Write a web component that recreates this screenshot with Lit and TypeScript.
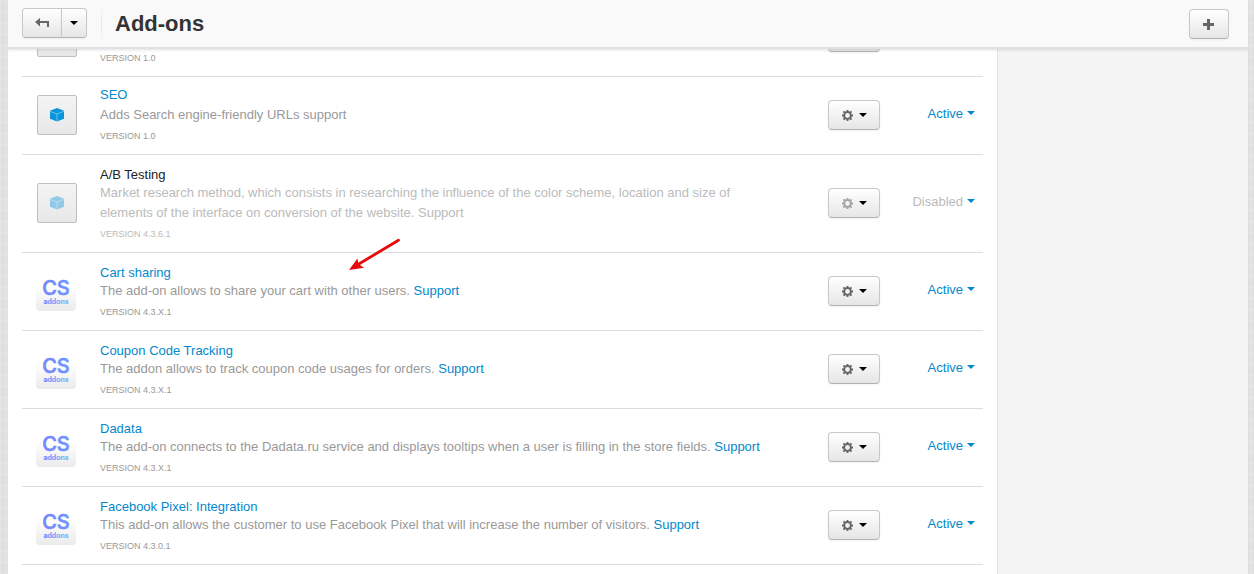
import { LitElement, html, css, svg, nothing } from "lit";
import { customElement, property } from "lit/decorators.js";
import { classMap } from "lit/directives/class-map.js";

interface Addon {
  name?: string;
  description?: string;
  support?: boolean;
  version: string;
  logo: "box" | "cs";
  disabled?: boolean;
  vendor?: boolean;
}

const ADDONS: Addon[] = [
  { version: "1.0", logo: "box" },
  { name: "SEO", description: "Adds Search engine-friendly URLs support", version: "1.0", logo: "box" },
  {
    name: "A/B Testing",
    description:
      "Market research method, which consists in researching the influence of the color scheme, location and size of elements of the interface on conversion of the website.",
    support: true,
    version: "4.3.6.1",
    logo: "box",
    disabled: true,
    vendor: true,
  },
  {
    name: "Cart sharing",
    description: "The add-on allows to share your cart with other users.",
    support: true,
    version: "4.3.X.1",
    logo: "cs",
    vendor: true,
  },
  {
    name: "Coupon Code Tracking",
    description: "The addon allows to track coupon code usages for orders.",
    support: true,
    version: "4.3.X.1",
    logo: "cs",
    vendor: true,
  },
  {
    name: "Dadata",
    description:
      "The add-on connects to the Dadata.ru service and displays tooltips when a user is filling in the store fields.",
    support: true,
    version: "4.3.X.1",
    logo: "cs",
    vendor: true,
  },
  {
    name: "Facebook Pixel: Integration",
    description:
      "This add-on allows the customer to use Facebook Pixel that will increase the number of visitors.",
    support: true,
    version: "4.3.0.1",
    logo: "cs",
    vendor: true,
  },
];

const buttonStyles = css`
  button {
    box-sizing: border-box;
    display: inline-flex;
    align-items: center;
    justify-content: center;
    height: 30px;
    margin: 0;
    padding: 0;
    border: 1px solid #c8c8c8;
    border-bottom-color: #b3b3b3;
    border-radius: 4px;
    background: linear-gradient(#ffffff, #e6e6e6);
    box-shadow: 0 1px 2px rgba(0, 0, 0, 0.05);
    color: #000;
    font: inherit;
    cursor: pointer;
  }
  .caret {
    width: 0;
    height: 0;
    border: 4px solid transparent;
    border-top-color: currentColor;
    border-bottom: 0;
  }
`;

@customElement("addon-logo")
export class AddonLogo extends LitElement {
  @property() kind: "box" | "cs" = "box";
  @property({ type: Boolean }) dimmed = false;

  static styles = css`
    :host {
      display: block;
      width: 40px;
      height: 40px;
    }
    .tile {
      box-sizing: border-box;
      width: 40px;
      height: 40px;
      display: grid;
      place-items: center;
      border-radius: 4px;
    }
    .box {
      border: 1px solid #c0c0c0;
      border-radius: 2px;
      background: linear-gradient(#f4f4f4, #e8e8e8);
    }
    .cs {
      background: linear-gradient(#ffffff 35%, #ebebeb);
    }
    svg {
      display: block;
    }
    .dimmed {
      opacity: 0.4;
    }
    .initials {
      font: 500 20px Inter, sans-serif;
    }
    .word {
      font: 600 7px Inter, sans-serif;
    }
  `;

  render() {
    return this.kind === "cs"
      ? html`<div class="tile cs">
          <svg width="40" height="40" viewBox="0 0 40 40" role="img" aria-label="CS addons">
            <defs>
              <linearGradient id="ink" x1="0" y1="0" x2="1" y2="0">
                <stop offset="0" stop-color="#7585fb" />
                <stop offset="1" stop-color="#6d95ff" />
              </linearGradient>
              <linearGradient id="sub" x1="0" y1="0" x2="1" y2="0">
                <stop offset="0" stop-color="#6d84fb" />
                <stop offset="1" stop-color="#79bdf8" />
              </linearGradient>
            </defs>
            <text class="initials" x="20" y="24" text-anchor="middle" fill="url(#ink)" stroke="url(#ink)" stroke-width="0.6">CS</text>
            <text class="word" x="20" y="33" text-anchor="middle" fill="url(#sub)" stroke="url(#sub)" stroke-width="0.2">addons</text>
          </svg>
        </div>`
      : html`<div class="tile box">
          <svg class=${this.dimmed ? "dimmed" : ""} width="14" height="14" viewBox="0 0 14 14" aria-hidden="true">
            <path d="M7 0 14 2.8V10.8L7 13.6 0 10.8V2.8Z" fill="#0895dc" />
            <path d="M0.2 3.4 7 6 13.8 3.4M7 6V13.4" fill="none" stroke="#9ad6f5" stroke-width="0.7" />
          </svg>
        </div>`;
  }
}

@customElement("page-toolbar")
export class PageToolbar extends LitElement {
  static styles = [
    buttonStyles,
    css`
      :host {
        box-sizing: border-box;
        display: flex;
        align-items: center;
        height: 47px;
        padding: 0 19px 0 14px;
        background: #f9f9f9;
        box-shadow: 0 2px 0 #e1e1e1, 0 3px 3px rgba(0, 0, 0, 0.12);
        clip-path: inset(0 0 -8px 0);
      }
      .group {
        display: flex;
        padding-bottom: 1px;
      }
      .back {
        width: 40px;
        border-radius: 4px 0 0 4px;
      }
      .more {
        width: 26px;
        margin-left: -1px;
        border-radius: 0 4px 4px 0;
      }
      .divider {
        width: 1px;
        height: 36px;
        margin: 0 13px 0 14px;
        background: linear-gradient(#f9f9f9, #e6e6e6, #f9f9f9);
      }
      h1 {
        flex: 1;
        margin: 0;
        color: #333;
        font-size: 22px;
        line-height: 30px;
      }
      .add {
        width: 40px;
      }
      svg {
        display: block;
      }
    `,
  ];

  render() {
    return html`
      <div class="group">
        <button class="back" aria-label="Back">
          <svg width="14" height="10" viewBox="0 0 14 10">
            <path d="M0 4 5 0V3H14V9H12V5H5V8.5Z" fill="#666" />
          </svg>
        </button>
        <button class="more" aria-label="Recent pages"><span class="caret"></span></button>
      </div>
      <span class="divider"></span>
      <h1>Add-ons</h1>
      <button class="add" aria-label="Add">
        <svg width="12" height="12" viewBox="0 0 12 12">
          <path d="M4 1H7V5H11V8H7V12H4V8H0V5H4Z" fill="#666" />
        </svg>
      </button>
    `;
  }
}

@customElement("addon-table")
export class AddonTable extends LitElement {
  @property({ attribute: false }) addons: Addon[] = [];

  static styles = [
    buttonStyles,
    css`
      :host {
        display: block;
      }
      table {
        width: 100%;
        border-collapse: separate;
        border-spacing: 0;
        table-layout: fixed;
      }
      .col-logo {
        width: 78px;
      }
      .col-tools {
        width: 72px;
      }
      .col-status {
        width: 103px;
      }
      td {
        box-sizing: border-box;
        height: 78px;
        padding: 0 0 1px;
        border-bottom: 1px solid #dcdcdc;
        vertical-align: middle;
      }
      .logo addon-logo {
        margin-left: 15px;
      }
      .logo addon-logo[kind="cs"] {
        margin-left: 14px;
      }
      .info {
        padding: 8px 40px 9px 0;
        vertical-align: bottom;
      }
      a {
        color: #0388cc;
        text-decoration: none;
      }
      .name {
        height: 20px;
        line-height: 20px;
      }
      .vendor .name {
        line-height: 24px;
      }
      .description {
        margin: 0;
        color: #999;
        line-height: 20px;
      }
      .version {
        display: block;
        padding-top: 2px;
        color: #999;
        font-size: 9px;
        line-height: 18px;
        text-transform: uppercase;
      }
      .tools button {
        width: 52px;
        gap: 6px;
      }
      .tools {
        text-align: right;
      }
      .tools button,
      .status button {
        vertical-align: middle;
      }
      .status {
        padding: 0 8px 4px 0;
        text-align: right;
      }
      .status button {
        height: 20px;
        gap: 4px;
        border: 0;
        background: none;
        box-shadow: none;
        color: #0388cc;
      }
      .status .caret {
        margin-bottom: 2px;
      }
      .disabled .name a {
        color: #222;
      }
      .disabled .description,
      .disabled .description a,
      .disabled .version,
      .disabled .state {
        color: #bbb;
      }
      .disabled .gear {
        opacity: 0.55;
      }
    `,
  ];

  private gear() {
    return svg`<svg class="gear" width="11" height="11" viewBox="0 0 12 12" aria-hidden="true">
      <circle cx="6" cy="6" r="3.7" fill="none" stroke="#666" stroke-width="2.2" />
      <path d="M6 0V2M6 10V12M0 6H2M10 6H12M1.6 1.6 3 3M9 9 10.4 10.4M10.4 1.6 9 3M3 9 1.6 10.4" stroke="#666" stroke-width="2" />
    </svg>`;
  }

  private row(a: Addon) {
    return html`<tr class=${classMap({ vendor: !!a.vendor, disabled: !!a.disabled })}>
      <td class="logo"><addon-logo kind=${a.logo} ?dimmed=${a.disabled}></addon-logo></td>
      <td class="info">
        ${a.name ? html`<div class="name"><a href="#">${a.name}</a></div>` : nothing}
        ${a.description
          ? html`<p class="description">${a.description}${a.support ? html` <a href="#">Support</a>` : nothing}</p>`
          : nothing}
        <span class="version">Version ${a.version}</span>
      </td>
      <td class="tools">
        <button aria-label="Settings">${this.gear()}<span class="caret"></span></button>
      </td>
      <td class="status">
        ${a.name
          ? html`<button><span class="state">${a.disabled ? "Disabled" : "Active"}</span><span class="caret"></span></button>`
          : nothing}
      </td>
    </tr>`;
  }

  render() {
    return html`<table>
      <colgroup>
        <col class="col-logo" />
        <col />
        <col class="col-tools" />
        <col class="col-status" />
      </colgroup>
      <tbody>
        ${this.addons.map((a) => this.row(a))}
      </tbody>
    </table>`;
  }
}

@customElement("app-root")
export class AppRoot extends LitElement {
  static styles = css`
    :host {
      box-sizing: border-box;
      display: block;
      height: 100vh;
      overflow: hidden;
      padding: 0 6px 0 8px;
      background: repeating-linear-gradient(90deg, rgba(255, 255, 255, 0.1) 0 2px, transparent 2px 5px),
        repeating-linear-gradient(rgba(255, 255, 255, 0.1) 0 3px, transparent 3px 11px), #dfdfdf;
      font: 13px/20px "Liberation Sans", Arial, sans-serif;
    }
    .page {
      position: relative;
      display: grid;
      grid-template-columns: minmax(0, 1fr) 250px;
      height: 100%;
      background: #fff;
    }
    page-toolbar {
      position: absolute;
      inset: 0 0 auto;
      z-index: 1;
    }
    .content {
      position: relative;
      padding: 0 14px;
      border-right: 1px solid #e3e3e3;
    }
    addon-table {
      margin-top: -1px;
    }
    aside {
      background: #f4f4f4;
    }
    .arrow {
      position: absolute;
      left: 340px;
      top: 238px;
    }
  `;

  render() {
    return html`<div class="page">
      <page-toolbar></page-toolbar>
      <main class="content">
        <addon-table .addons=${ADDONS}></addon-table>
        <svg class="arrow" width="54" height="34" viewBox="0 0 54 34" aria-hidden="true">
          <path d="M50.5 2.2 10 26.5" stroke="#e60b0b" stroke-width="2.8" stroke-linecap="round" />
          <path d="M1 32 9.4 20.5 10.5 26 16 29.8Z" fill="#e60b0b" />
        </svg>
      </main>
      <aside></aside>
    </div>`;
  }
}
